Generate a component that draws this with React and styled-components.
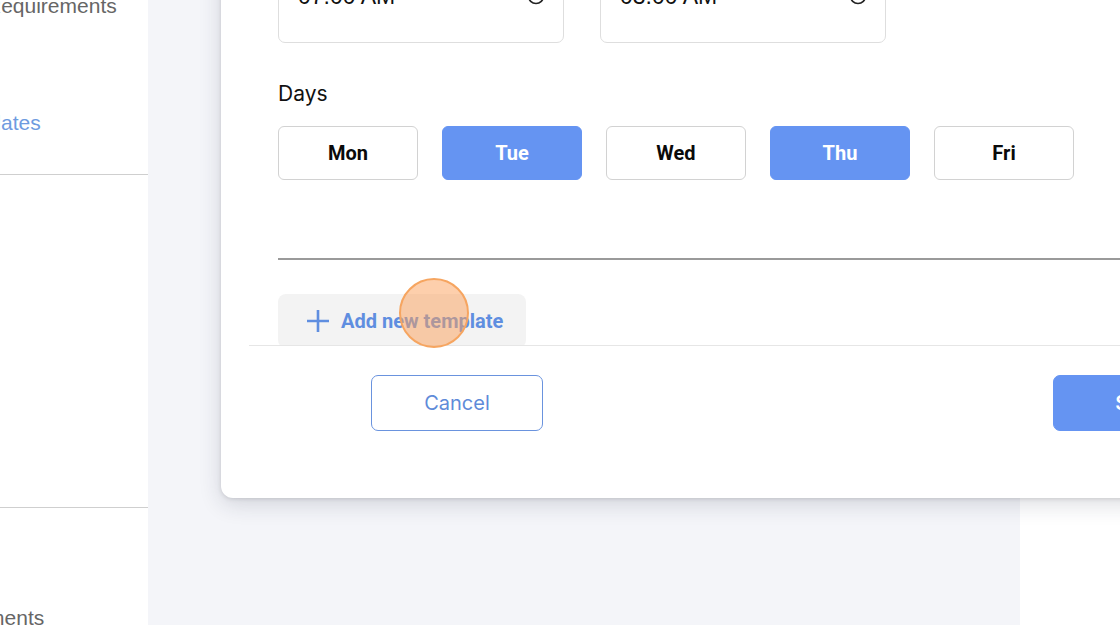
import React from "react";
import styled, { createGlobalStyle } from "styled-components";

const GlobalStyle = createGlobalStyle`
  html, body { margin: 0; padding: 0; }
  body { font-family: "Liberation Sans", Arial, sans-serif; background: #ffffff; }
  * { box-sizing: border-box; }
`;

const Page = styled.div`
  position: relative;
  width: 1120px;
  height: 625px;
  overflow: hidden;
  display: flex;
`;

const Sidebar = styled.aside`
  width: 148px;
  flex: none;
  background: #ffffff;
  overflow: hidden;
  display: flex;
  flex-direction: column;
`;

const NavLink = styled.div`
  margin-top: ${(p) => p.$top}px;
  margin-left: ${(p) => p.$shift}px;
  font-family: "Liberation Sans", Arial, sans-serif;
  font-size: 21px;
  line-height: 24px;
  white-space: nowrap;
  color: ${(p) => (p.$active ? "#6e9bdf" : "#666666")};
`;

const NavDivider = styled.hr`
  margin: ${(p) => p.$top}px 0 0;
  border: none;
  border-top: 1px solid #cfcfcf;
  width: 100%;
`;

const Main = styled.main`
  width: 872px;
  flex: none;
  background: #f4f5f9;
`;

const RightPane = styled.div`
  flex: 1;
  background: #ffffff;
`;

const Modal = styled.div`
  position: absolute;
  left: 221px;
  top: -60px;
  width: 1154px;
  background: #ffffff;
  border-radius: 12px;
  box-shadow: 0 6px 22px rgba(30, 35, 60, 0.16), 0 1px 4px rgba(0, 0, 0, 0.12);
  display: flex;
  flex-direction: column;
`;

const Body = styled.div`
  height: 405px;
  overflow: hidden;
  padding: 31px 0 0 57px;
  display: flex;
  flex-direction: column;
`;

const TimeRow = styled.div`
  display: flex;
  gap: 36px;
`;

const TimeInput = styled.div`
  width: 286px;
  height: 72px;
  border: 1.5px solid #dedede;
  border-radius: 7px;
  padding: 12px 18px 0 19px;
  display: flex;
  justify-content: space-between;
  align-items: flex-start;
  font-family: "Liberation Sans", Arial, sans-serif;
  font-size: 23px;
  line-height: 24px;
  color: #111111;
`;

const ClockIcon = () => (
  <svg width="18" height="18" viewBox="0 0 24 24" fill="none" stroke="#222" strokeWidth="2.2" strokeLinecap="round" strokeLinejoin="round" style={{ marginTop: 3 }}>
    <circle cx="12" cy="12" r="10" />
    <path d="M12 6v6l4 2" />
  </svg>
);

const Label = styled.div`
  margin-top: 39px;
  font-family: "Inter", "Open Sans", sans-serif;
  font-size: 21px;
  line-height: 24px;
  color: #111111;
`;

const DayRow = styled.div`
  margin-top: 20px;
  display: flex;
  gap: 24px;
`;

const DayButton = styled.button`
  width: 140px;
  height: 54px;
  border-radius: 6px;
  border: 1.5px solid ${(p) => (p.$selected ? "#6594f2" : "#d2d2d2")};
  background: ${(p) => (p.$selected ? "#6594f2" : "#ffffff")};
  color: ${(p) => (p.$selected ? "#ffffff" : "#0a0a0a")};
  font-family: "Roboto", sans-serif;
  font-weight: 700;
  font-size: 20px;
  padding: 0;
  cursor: pointer;
`;

const Rule = styled.div`
  margin-top: 78px;
  height: 2px;
  background: #9a9a9a;
  flex: none;
`;

const AddButton = styled.button`
  margin-top: 34px;
  align-self: flex-start;
  height: 54px;
  flex: none;
  display: flex;
  align-items: center;
  gap: 12px;
  padding: 0 23px 0 29px;
  border: none;
  border-radius: 8px;
  background: #f3f3f3;
  color: #5f8ee0;
  font-family: "Roboto", sans-serif;
  font-weight: 700;
  font-size: 20px;
  cursor: pointer;
`;

const PlusIcon = () => (
  <svg width="22" height="22" viewBox="0 0 22 22" fill="none" stroke="#5f8ee0" strokeWidth="2.6" strokeLinecap="square">
    <path d="M11 1v20M1 11h20" />
  </svg>
);

const Footer = styled.div`
  margin: 0 28px;
  border-top: 1px solid #e6e6e6;
  padding: 29px 122px 67px;
  display: flex;
  justify-content: space-between;
`;

const FooterButton = styled.button`
  width: 172px;
  height: 56px;
  border-radius: 7px;
  border: 1.5px solid ${(p) => (p.$primary ? "#6594f2" : "#6a93de")};
  background: ${(p) => (p.$primary ? "#6594f2" : "#ffffff")};
  color: ${(p) => (p.$primary ? "#ffffff" : "#5f8bd9")};
  font-family: "Inter", "Open Sans", sans-serif;
  font-size: 20px;
  font-weight: ${(p) => (p.$primary ? 600 : 400)};
  cursor: pointer;
`;

const ClickMarker = styled.div`
  position: absolute;
  left: 399px;
  top: 278px;
  width: 70px;
  height: 70px;
  border-radius: 50%;
  background: rgba(252, 160, 90, 0.5);
  border: 2px solid #f6a560;
  pointer-events: none;
`;

const days = [
  { name: "Mon", selected: false },
  { name: "Tue", selected: true },
  { name: "Wed", selected: false },
  { name: "Thu", selected: true },
  { name: "Fri", selected: false },
];

export default function App() {
  return (
    <>
      <GlobalStyle />
      <Page>
        <Sidebar>
          <NavLink $top={-6} $shift={-14}>Requirements</NavLink>
          <NavLink $top={93} $shift={-55} $active>Templates</NavLink>
          <NavDivider $top={39} />
          <NavDivider $top={332} />
          <NavLink $top={98} $shift={-76}>Assignments</NavLink>
        </Sidebar>
        <Main />
        <RightPane />
        <Modal>
          <Body>
            <TimeRow>
              <TimeInput>
                <span>07:00 AM</span>
                <ClockIcon />
              </TimeInput>
              <TimeInput>
                <span>03:00 AM</span>
                <ClockIcon />
              </TimeInput>
            </TimeRow>
            <Label>Days</Label>
            <DayRow>
              {days.map((d) => (
                <DayButton key={d.name} $selected={d.selected}>
                  {d.name}
                </DayButton>
              ))}
            </DayRow>
            <Rule />
            <AddButton>
              <PlusIcon />
              Add new template
            </AddButton>
          </Body>
          <Footer>
            <FooterButton>Cancel</FooterButton>
            <FooterButton $primary>Save</FooterButton>
          </Footer>
        </Modal>
        <ClickMarker />
      </Page>
    </>
  );
}
